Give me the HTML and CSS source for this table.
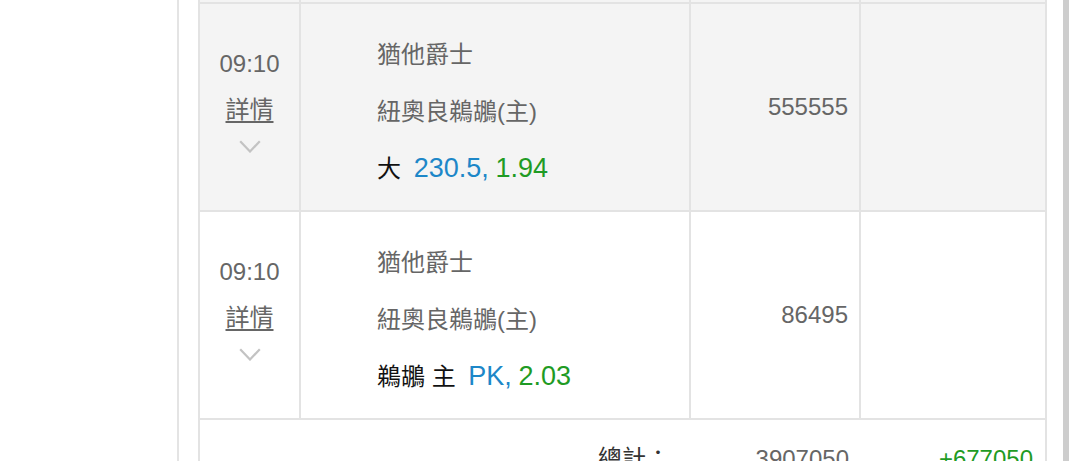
FILE: index.html
```html
<!DOCTYPE html>
<html lang="zh-TW">
<head>
<meta charset="UTF-8" />
<title>注單明細</title>
<link rel="stylesheet" href="styles.css">
</head>
<body>
<div class="panel">
  <table class="bets">
    <colgroup>
      <col class="col-time"><col class="col-game"><col class="col-stake"><col class="col-result">
    </colgroup>
    <tbody>
      <tr class="stub odd"><td></td><td></td><td></td><td></td></tr>
      <tr class="odd">
        <td class="time">
          <div class="clock">09:10</div>
          <div class="detail"><a href="#">詳情</a></div>
          <svg class="chevron" width="22" height="13" viewBox="0 0 22 13"><path d="M1.2 1.2 L11 11.5 L20.8 1.2" fill="none" stroke="#c3c3c3" stroke-width="2.2"/></svg>
        </td>
        <td class="game">
          <div class="team">猶他爵士</div>
          <div class="team">紐奧良鵜鶘(主)</div>
          <div class="pick">大 <span class="line">230.5,</span> <span class="odds">1.94</span></div>
        </td>
        <td class="stake">555555</td>
        <td class="result"></td>
      </tr>
      <tr>
        <td class="time">
          <div class="clock">09:10</div>
          <div class="detail"><a href="#">詳情</a></div>
          <svg class="chevron" width="22" height="13" viewBox="0 0 22 13"><path d="M1.2 1.2 L11 11.5 L20.8 1.2" fill="none" stroke="#c3c3c3" stroke-width="2.2"/></svg>
        </td>
        <td class="game">
          <div class="team">猶他爵士</div>
          <div class="team">紐奧良鵜鶘(主)</div>
          <div class="pick">鵜鶘 主 <span class="line">PK,</span> <span class="odds">2.03</span></div>
        </td>
        <td class="stake">86495</td>
        <td class="result"></td>
      </tr>
      <tr class="total">
        <td colspan="2" class="total-label">總計：</td>
        <td class="stake">3907050</td>
        <td class="result win">+677050</td>
      </tr>
    </tbody>
  </table>
</div>
</body>
</html>
```

FILE: styles.css
```css
html {
  overflow: hidden;
}
body {
  margin: 0;
  background: #fff;
  font-family: "Liberation Sans", "Noto Sans CJK TC", sans-serif;
  font-size: 24px;
  color: #666;
}
.panel {
  width: 849px;
  margin-left: 177px;
  padding: 0 16px 0 19px;
  border-left: 2px solid #e4e4e4;
  border-right: 6px solid #cdcdcd;
}
.bets {
  width: 849px;
  table-layout: fixed;
  border-collapse: collapse;
  border: 2px solid #e3e3e3;
  border-top: none;
}
.col-time { width: 101px; }
.col-game { width: 390px; }
.col-stake { width: 170px; }
.col-result { width: 186px; }

td {
  border: 2px solid #e3e3e3;
  padding: 0;
}
tr.odd td {
  background: #f4f4f4;
}
.stub td {
  height: 2px;
  border-top: none;
}

.time {
  vertical-align: top;
  text-align: center;
  padding-top: 37px;
}
.clock,
.detail {
  line-height: 46px;
}
.detail a {
  color: #666;
  text-decoration: underline;
  text-underline-offset: 3px;
}
.chevron {
  display: block;
  margin: 7px auto 0;
}

.game {
  vertical-align: top;
  padding: 22px 10px 13px 76px;
  line-height: 57px;
  height: 171px;
}
.pick {
  color: #111;
}
.line,
.odds {
  font-size: 27px;
}
.line {
  margin-left: 6px;
  color: #1d87c8;
}
.odds {
  color: #1f9b24;
}

.stake {
  text-align: right;
  padding-right: 11px;
}
.result {
  text-align: right;
  padding-right: 12px;
}

.total td {
  border-left: none;
  border-right: none;
  border-bottom: none;
  vertical-align: top;
  padding-top: 25px;
  height: 60px;
  line-height: 27px;
}
.total-label {
  text-align: right;
  padding-right: 20px;
  color: #333;
}
.win {
  color: #1f9b24;
}
```
